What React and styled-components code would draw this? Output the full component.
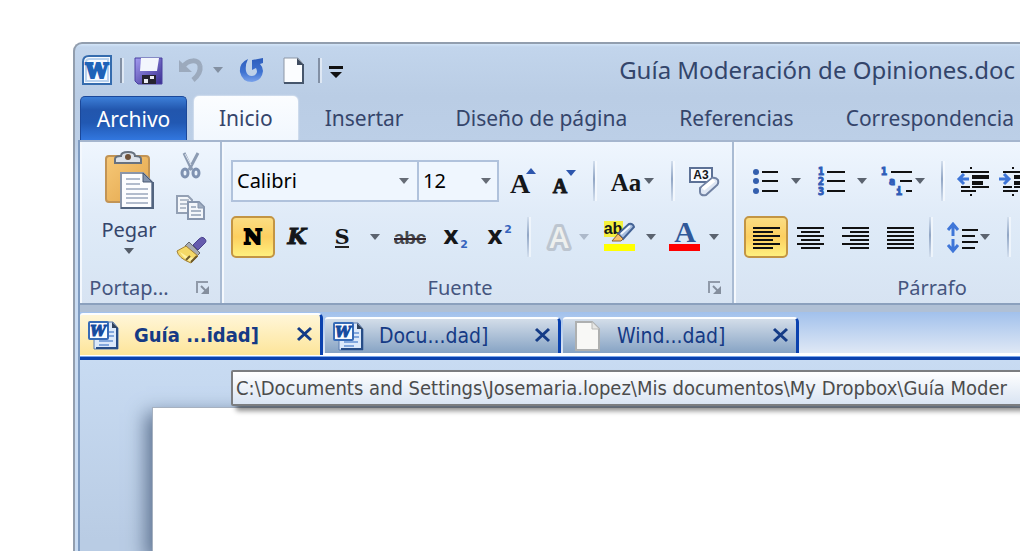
import React from "react";
import styled, { createGlobalStyle, css } from "styled-components";

const UI = `"Noto Sans", "Open Sans", sans-serif`;
const TAHOMA = `Tahoma, "DejaVu Sans Condensed", "DejaVu Sans", sans-serif`;
const SERIF = `"DejaVu Serif", "Liberation Serif", serif`;

const Global = createGlobalStyle`
  * { box-sizing: border-box; }
  body { margin: 0; background: #fff; font-family: ${UI}; }
  button { font: inherit; color: inherit; border: 0; padding: 0; background: none; }
  svg { display: block; }
`;

const Screen = styled.main`
  display: flex;
  min-height: 100vh;
  padding: 42px 0 0 73px;
  overflow: hidden;
`;
const Frame = styled.section`
  flex: 1;
  min-width: 0;
  display: flex;
  flex-direction: column;
  padding-left: 3px;
  border: 2px solid #929eae;
  border-width: 2px 0 0 2px;
  border-radius: 9px 0 0 0;
  background: linear-gradient(#d3e5f8 0, #c2d5ec 3px, #bacde5 52px, #bccfe7 98px, #c9dcf3 130px);
  overflow: hidden;
`;
const TitleBar = styled.header`
  display: flex;
  align-items: center;
  height: 52px;
  padding: 0 5px 0 2px;
`;
const Title = styled.h1`
  margin: 0 0 0 auto;
  font-size: 24px;
  line-height: 32px;
  font-weight: 400;
  color: #33456b;
  white-space: nowrap;
`;
const Tool = styled.button`
  flex: none;
  width: ${(p) => p.$w}px;
  height: 42px;
  border-radius: 5px;
  ${(p) =>
    p.$on &&
    css`
      border: 2px solid #c39544;
      background: linear-gradient(#fbdd83, #fdcf60 50%, #fff07e);
      svg { margin: -2px; }
    `}
`;
const Divider = styled.span`
  flex: none;
  width: 2px;
  height: ${(p) => p.$h || 40}px;
  margin: 0 6px;
  background: ${(p) => p.$c || "linear-gradient(#d3dfee, #91a6c5 45%, #d3dfee)"};
  box-shadow: 2px 0 0 #ffffff80;
`;
const TabRow = styled.nav`
  display: flex;
  gap: 2px;
  height: 44px;
  padding-left: 2px;
  font-size: 21px;
  line-height: 42px;
  color: #35456b;
  white-space: nowrap;
`;
const FileTab = styled.button`
  flex: none;
  width: 107px;
  margin-right: 5px;
  border: 1px solid #1b489a;
  border-bottom: 0;
  border-radius: 5px 5px 0 0;
  color: #fff;
  background: linear-gradient(#3d7fd8, #2256ad 30%, #2158b2 60%, #3277df);
`;
const Tab = styled.button`
  flex: none;
  padding: 0 25px;
  border-radius: 5px 5px 0 0;
  ${(p) => p.$on && css`background: linear-gradient(#fbfdff, #f1f7fe); box-shadow: 0 0 2px #fff;`}
`;
const Body = styled.div`
  flex: 1;
  display: flex;
  flex-direction: column;
  border-left: 2px solid #7f9cc2;
`;
const Ribbon = styled.div`
  display: flex;
  height: 165px;
  border-top: 2px solid #a5b6ce;
  border-bottom: 2px solid #8ba0bd;
  background: linear-gradient(#eff6fe, #e0ebf8 45%, #dbe8f6 70%, #d7e3f2);
  overflow: hidden;
`;
const Group = styled.section`
  flex: none;
  display: flex;
  flex-direction: column;
  min-width: ${(p) => p.$w}px;
  padding: 0 ${(p) => p.$pad}px;
  border-right: 2px solid #a9bbd3;
  box-shadow: inset 2px 0 0 #f4f8fd;
`;
const Tools = styled.div`
  display: flex;
  align-items: center;
  height: 42px;
  margin-top: ${(p) => p.$top}px;
`;
const GroupFoot = styled.footer`
  display: flex;
  align-items: center;
  height: 30px;
  margin-top: auto;
  padding-right: ${(p) => p.$end || 0}px;
  color: #45557f;
  font-size: 20px;
  line-height: 28px;
  span { flex: 1; padding-right: 18px; text-align: center; white-space: nowrap; }
`;
const Clip = styled.div`
  display: flex;
  height: 131px;
  padding-left: 6px;
`;
const PasteButton = styled.button`
  width: 84px;
  display: flex;
  flex-direction: column;
  align-items: center;
  padding-top: 8px;
  font-size: 20px;
  line-height: 28px;
  color: #35456b;
  svg:first-child { margin-bottom: 4px; }
`;
const ClipStack = styled.div`
  display: flex;
  flex-direction: column;
  padding: 3px 0 0;
`;
const Combo = styled.label`
  display: grid;
  flex: none;
  width: ${(p) => p.$w}px;
  height: 42px;
  > * { grid-area: 1 / 1; }
  svg { justify-self: end; align-self: center; margin-right: 8px; pointer-events: none; }
`;
const Select = styled.select`
  appearance: none;
  width: 100%;
  padding: 0 4px;
  border: 2px solid #b0c2dc;
  border-right-width: ${(p) => (p.$joined ? 0 : 2)}px;
  border-radius: 0;
  background: #eff6fe;
  color: #000;
  font: 20px/28px ${UI};
`;
const DocTabs = styled.nav`
  display: flex;
  align-items: flex-end;
  gap: 2px;
  height: 55px;
  border-top: 7px solid #b0c0d5;
  border-bottom: 3px solid #0a41ae;
  box-shadow: inset 0 -1px 0 #79a5ea;
  background: linear-gradient(#a2c1ec, #dfe8f5 41px, #fff 41px);
`;
const DocTab = styled.div`
  display: flex;
  align-items: center;
  flex: none;
  width: ${(p) => (p.$on ? 243 : 236)}px;
  height: ${(p) => (p.$on ? 42 : 36)}px;
  margin-bottom: ${(p) => (p.$on ? 2 : 4)}px;
  padding: 0 6px 0 8px;
  border-right: 3px solid #0a41ae;
  border-top: 2px solid #fdfeff;
  border-radius: 3px 5px 0 0;
  background: ${(p) =>
    p.$on ? "linear-gradient(#fff6d8, #fde59a)" : "linear-gradient(#d3dde9, #86a3c4)"};
  color: #153a85;
  font-family: ${TAHOMA};
  font-size: ${(p) => (p.$on ? 20 : 21)}px;
  line-height: 28px;
  font-weight: ${(p) => (p.$on ? 700 : 400)};
`;
const DocName = styled.button`
  flex: 1;
  display: flex;
  align-items: center;
  gap: 14px;
  white-space: nowrap;
`;
const Workspace = styled.div`
  position: relative;
  flex: 1;
  display: flex;
  min-height: 190px;
  padding: 47px 0 0 72px;
  background: linear-gradient(#c8dbf2, #b9cce4 180px);
`;
const Paper = styled.article`
  flex: 1;
  background: #fff;
  border: 1px solid #a6b1c0;
  border-width: 1px 0 0 1px;
  box-shadow: -4px 8px 18px 2px #5d7290;
`;
const Tooltip = styled.div`
  position: absolute;
  top: 10px;
  left: 151px;
  right: -12px;
  padding: 3px;
  border: 2px solid #7b7d80;
  border-radius: 2px;
  background: linear-gradient(#fff, #d9e4f3);
  box-shadow: 5px 5px 5px #00000070;
  color: #4c4c4c;
  font-family: ${TAHOMA};
  font-size: 20px;
  line-height: 26px;
  white-space: nowrap;
`;

const Arrow = ({ x = 0, y = 18, c = "#5b636f" }) => (
  <path d={`M${x - 5} ${y}h10l-5 6z`} fill={c} />
);
const DropArrow = () => (
  <svg width="10" height="6"><path d="M0 0h10l-5 6z" fill="#666c76" /></svg>
);
const Icon = ({ w, h = 42, children }) => (
  <svg width={w} height={h} viewBox={`0 0 ${w} ${h}`} aria-hidden="true">{children}</svg>
);
const IconTool = ({ w, label, on, children }) => (
  <Tool $w={w} $on={on} aria-label={label} aria-pressed={on}>
    <Icon w={w}>{children}</Icon>
  </Tool>
);
const Glyph = ({ x, y, s, f = SERIF, c = "#15171a", b = 700, i, heavy, children }) => (
  <text x={x} y={y} fontSize={s} fontFamily={f} fill={c} stroke={heavy ? c : "none"} strokeWidth={heavy || 0} fontWeight={b} fontStyle={i ? "italic" : "normal"} textAnchor="middle">
    {children}
  </text>
);
const Lines = ({ rows, c = "#111" }) =>
  rows.map(([x, y, w], k) => <rect key={k} x={x} y={y} width={w} height="2" fill={c} />);

const Launcher = () => (
  <button aria-label="Más opciones">
    <svg width="16" height="16" viewBox="0 0 16 16">
      <path d="M2 13V2h11" stroke="#909aa9" strokeWidth="2" fill="none" />
      <path d="M6 6l5 5" stroke="#848e9d" strokeWidth="2" />
      <path d="M14 6v8H6z" fill="#848e9d" />
    </svg>
  </button>
);

const WordDoc = () => (
  <svg width="32" height="32" viewBox="0 0 32 32" aria-hidden="true">
    <path d="M6 3h19l5 6v21H6z" fill="#dce9fa" stroke="#5a7cb0" strokeWidth="1" />
    <path d="M29 9v20H8" fill="none" stroke="#274d87" strokeWidth="2" />
    <path d="M24 3v6h6z" fill="#31435d" />
    <path d="M21 13h5M21 17h5M11 22h14M11 26h10" stroke="#82a7dc" strokeWidth="2" />
    <rect x="1" y="3" width="19" height="17" rx="1" fill="#f8fbff" stroke="#376bb7" strokeWidth="2" />
    <Glyph x={10} y={17} s={14} i c="#164b9f" heavy={1}>W</Glyph>
  </svg>
);
const BlankDoc = () => (
  <svg width="32" height="32" viewBox="0 0 32 32" aria-hidden="true">
    <path d="M5 2h16l7 7v21H5z" fill="#f8f8f6" stroke="#aeb0b0" strokeWidth="2" />
    <path d="M21 2v7h7" fill="#e7e7e5" stroke="#b8b8b6" strokeWidth="1" />
  </svg>
);
const Close = ({ name }) => (
  <button aria-label={`Cerrar ${name}`}>
    <svg width="18" height="18" viewBox="0 0 18 18">
      <path d="M2 2l13 12M15 2L2 14" stroke="#143b86" strokeWidth="3" />
    </svg>
  </button>
);

const docs = [
  { name: "Guía ...idad]", on: true, icon: <WordDoc /> },
  { name: "Docu...dad]", icon: <WordDoc /> },
  { name: "Wind...dad]", icon: <BlankDoc /> },
];

function QuickAccess() {
  const bar = "#8290a5";
  return (
    <>
      <IconTool w={34} label="Word">
        <path d="M9 7h22v28H3V13q0-6 6-6z" fill="#f6faff" stroke="#356cae" strokeWidth="2" />
        <path d="M6 13q0-3 4-3h18v22H6z" stroke="#b9d2ee" strokeWidth="2" fill="none" />
        <Glyph x={17} y={29} s={20} c="#1e63b8" heavy={2}>W</Glyph>
      </IconTool>
      <Divider $h={25} $c={bar} />
      <IconTool w={40} label="Guardar">
        <defs>
          <linearGradient id="disk" x2="1" y2="1"><stop stopColor="#a39cf0" /><stop offset="1" stopColor="#392d91" /></linearGradient>
        </defs>
        <path d="M7 9h27v26H10l-3-3z" fill="url(#disk)" stroke="#4a40a0" strokeWidth="1" />
        <path d="M13 9h18l-2 13H12z" fill="#f3f6fd" />
        <path d="M14 26h14v9H14z" fill="#25232f" />
        <path d="M16 30h4v4h-4zM22 27h4v3h-4z" fill="#eceef4" />
      </IconTool>
      <IconTool w={60} label="Deshacer">
        <path d="M11 11v12h13z" fill="#9caabd" />
        <path d="M15 18c5-8 16-8 17-1 1 6-2 10-7 14" fill="none" stroke="#9caabd" strokeWidth="5" />
        <Arrow x={50} y={18} c="#8390a2" />
      </IconTool>
      <IconTool w={48} label="Rehacer">
        <defs>
          <linearGradient id="redo" gradientUnits="userSpaceOnUse" x1="0" y1="9" x2="0" y2="33"><stop stopColor="#2c5cbb" /><stop offset=".6" stopColor="#3f73d2" /><stop offset="1" stopColor="#7aa2ea" /></linearGradient>
        </defs>
        <path d="M20 10Q11 14 12 23q2 10 12 10 10-1 11-11 0-4-3-7l3-1V9l-11 2v10l4-2q1 2 1 4-1 4-5 4-5 0-6-5-1-6 2-12z" fill="url(#redo)" />
      </IconTool>
      <IconTool w={36} label="Nuevo">
        <path d="M8 9h14l5 6v19H8z" fill="#fbfdff" stroke="#8d97a6" strokeWidth="1" />
        <path d="M27 15v19H8" fill="none" stroke="#46566c" strokeWidth="2" />
        <path d="M21 9v7h7z" fill="#3f4d61" />
      </IconTool>
      <Divider $h={25} $c={bar} />
      <IconTool w={24} label="Personalizar">
        <path d="M3 17h14v3H3zM4 23h12l-6 6z" fill="#111" />
      </IconTool>
    </>
  );
}

function Clipboard() {
  return (
    <Group $w={142} $pad={1}>
      <Clip>
        <PasteButton>
          <svg width="54" height="62" viewBox="0 0 54 62" aria-hidden="true">
            <defs><linearGradient id="board" x2="1" y2="1"><stop stopColor="#f6c878" /><stop offset="1" stopColor="#e3a64b" /></linearGradient></defs>
            <rect x="4" y="6" width="43" height="46" rx="3" fill="url(#board)" stroke="#c29455" strokeWidth="2" />
            <path d="M13 13V9q0-3 6-3 0-4 7-4t7 4q6 0 6 3v4z" fill="#dce2ea" stroke="#68727f" strokeWidth="2" />
            <circle cx="26" cy="7" r="3" fill="#705239" />
            <path d="M19 23h22l9 9v26H19z" fill="#fcfdff" stroke="#8995aa" strokeWidth="2" />
            <path d="M51 32v26H19" fill="none" stroke="#52647f" strokeWidth="2" />
            <path d="M41 23v9h9z" fill="#8292ac" stroke="#485872" />
            <path d="M24 29h14M24 34h14M24 39h22M24 44h22M24 48h22M24 53h22" stroke="#b2bccd" strokeWidth="2" />
          </svg>
          Pegar
          <Icon w={10} h={12}><path d="M0 4h10l-5 6z" fill="#555d69" /></Icon>
        </PasteButton>
        <ClipStack>
          <IconTool w={42} label="Cortar">
            <path d="M13 8l8 17M27 8l-9 17" stroke="#8d9cb3" strokeWidth="3" />
            <path d="M14 9l6 11" stroke="#dfe6ef" strokeWidth="1" />
            <ellipse cx="14" cy="28" rx="3" ry="4" fill="none" stroke="#7f92b1" strokeWidth="3" />
            <ellipse cx="25" cy="28" rx="3" ry="4" fill="none" stroke="#7f92b1" strokeWidth="3" />
          </IconTool>
          <IconTool w={42} label="Copiar">
            <path d="M6 9h11l4 4v13H6z" fill="#f3f6fa" stroke="#93a0b4" strokeWidth="2" />
            <path d="M9 13h9M9 17h9M9 21h6" stroke="#b3bdcb" strokeWidth="2" />
            <path d="M17 15h11l5 5v12H17z" fill="#f3f6fa" stroke="#8796ae" strokeWidth="2" />
            <path d="M27 15v6h6" fill="#a1afc2" stroke="#8796ae" />
            <path d="M20 20h5M20 24h10M20 28h10" stroke="#a9b5c6" strokeWidth="2" />
          </IconTool>
          <IconTool w={42} label="Copiar formato">
            <path d="M33 9q4 3 0 6l-6 6-5-5 6-6q3-3 5-1z" fill="#665cae" stroke="#4a418d" />
            <path d="M18 13l11 11-4 4L14 17z" fill="#a9acb0" stroke="#66696f" />
            <path d="M15 17L6 22q1 7 14 12l7-7z" fill="#f5d967" stroke="#a28036" />
            <path d="M9 23l8 5 7 1-4 4q-7-3-11-10z" fill="#fff1a2" />
            <path d="M20 33l6-6M15 31l4-4" stroke="#6d592b" strokeWidth="2" />
          </IconTool>
        </ClipStack>
      </Clip>
      <GroupFoot $end={8}><span>Portap...</span><Launcher /></GroupFoot>
    </Group>
  );
}

function FontGroup() {
  return (
    <Group $w={512} $pad={9}>
      <Tools $top={18}>
        <Combo $w={186}>
          <Select $joined aria-label="Fuente" defaultValue="Calibri"><option>Calibri</option></Select>
          <DropArrow />
        </Combo>
        <Combo $w={82}>
          <Select aria-label="Tamaño" defaultValue="12"><option>12</option></Select>
          <DropArrow />
        </Combo>
        <IconTool w={44} label="Aumentar fuente">
          <Glyph x={21} y={33} s={28} f="Liberation Serif, serif">A</Glyph>
          <path d="M27 14l5-6 5 6z" fill="#2d56ad" />
        </IconTool>
        <IconTool w={44} label="Reducir fuente">
          <Glyph x={17} y={33} s={20} f="Liberation Serif, serif" heavy={1}>A</Glyph>
          <path d="M23 10h10l-5 6z" fill="#2d56ad" />
        </IconTool>
        <Divider />
        <IconTool w={64} label="Cambiar mayúsculas">
          <Glyph x={25} y={31} s={25} f="Liberation Serif, serif">Aa</Glyph>
          <Arrow x={48} />
        </IconTool>
        <Divider />
        <IconTool w={44} label="Borrar formato">
          <rect x="11" y="8" width="22" height="14" fill="#f9fbff" stroke="#5c7196" strokeWidth="2" />
          <Glyph x={22} y={19} s={12} f="Liberation Sans, sans-serif">A3</Glyph>
          <path d="M21 28L33 18q4-1 6 2 1 4-2 6L27 35q-6 1-6-3z" fill="#dfe7f4" stroke="#7182a3" strokeWidth="2" />
          <path d="M24 29l11-9" stroke="#fff" strokeWidth="4" />
        </IconTool>
      </Tools>
      <Tools $top={14}>
        <IconTool w={44} label="Negrita" on>
          <Glyph x={22} y={28} s={20} c="#000" heavy={2}>N</Glyph>
        </IconTool>
        <IconTool w={44} label="Cursiva"><Glyph x={22} y={28} s={22} i heavy={1}>K</Glyph></IconTool>
        <IconTool w={66} label="Subrayado">
          <Glyph x={23} y={28} s={21}>S</Glyph>
          <path d="M16 30h14v2H16z" fill="#222" />
          <Arrow x={56} />
        </IconTool>
        <IconTool w={48} label="Tachado">
          <Glyph x={25} y={28} s={19} f="Liberation Sans, sans-serif" c="#45474c">abc</Glyph>
          <path d="M9 22h32v2H9z" fill="#33262d" />
        </IconTool>
        <IconTool w={44} label="Subíndice">
          <Glyph x={18} y={28} s={24} f="DejaVu Sans, sans-serif">x</Glyph>
          <Glyph x={31} y={32} s={11} f="DejaVu Sans, sans-serif" c="#3563bd">2</Glyph>
        </IconTool>
        <IconTool w={44} label="Superíndice">
          <Glyph x={18} y={28} s={24} f="DejaVu Sans, sans-serif">x</Glyph>
          <Glyph x={31} y={17} s={11} f="DejaVu Sans, sans-serif" c="#3563bd">2</Glyph>
        </IconTool>
        <Divider />
        <IconTool w={60} label="Efectos de texto">
          <text x="24" y="32" fontSize="29" fontFamily="Open Sans, sans-serif" fontWeight="600" textAnchor="middle" fill="#eef0ee" stroke="#bcc5d0" strokeWidth="6" strokeLinejoin="round" paintOrder="stroke">A</text>
          <Arrow x={49} c="#adb9ca" />
        </IconTool>
        <IconTool w={66} label="Resaltado">
          <path d="M9 5h19v16H9z" fill="#f4f03d" />
          <Glyph x={18} y={18} s={16} f="Liberation Sans, sans-serif">ab</Glyph>
          <path d="M23 18L34 8q4-1 5 3L28 23z" fill="#a9bfdf" stroke="#446395" strokeWidth="2" />
          <path d="M26 18l9-8" stroke="#f2f7fd" strokeWidth="2" />
          <path d="M17 25l6-7 5 5-2 2z" fill="#f7c26c" stroke="#866138" />
          <path d="M9 28h31v7H9z" fill="#ff0" />
          <Arrow x={56} />
        </IconTool>
        <IconTool w={62} label="Color de fuente">
          <Glyph x={24} y={26} s={30} f="Liberation Serif, serif" c="#315999">A</Glyph>
          <path d="M8 28h31v7H8z" fill="#f00" />
          <Arrow x={53} />
        </IconTool>
      </Tools>
      <GroupFoot><span>Fuente</span><Launcher /></GroupFoot>
    </Group>
  );
}

const Level = ({ x, y, children }) => (
  <Glyph x={x} y={y} s={10} f="DejaVu Sans Mono, monospace" c="#2f5db8" heavy={1}>{children}</Glyph>
);
const wide = 27;
const align = (short) =>
  [11, 15, 19, 23, 27, 31].map((y, k) => [9 + (k % 2 ? short[0] : 0), y, k % 2 ? short[1] : wide]);

const Indent = ({ left }) => (
  <>
    <Lines rows={[[8, 11, 9], [19, 11, 17], [8, 26, 9], [19, 26, 17], [8, 30, 9], [19, 30, 4]]} />
    <path d="M19 15h17v4H19zM19 21h11v4H19zM17 7h2v2h-2zM17 11h2v2h-2zM17 34h2v2h-2zM17 30h2v2h-2z" fill="#111" />
    <path
      d={left ? "M16 19H6M11 14l-5 5 5 5" : "M4 19h10M9 14l5 5-5 5"}
      fill="none"
      stroke="#3f76d8"
      strokeWidth="3"
    />
  </>
);

function Paragraph() {
  return (
    <Group $w={432} $pad={10}>
      <Tools $top={18}>
        <IconTool w={66} label="Viñetas">
          {[12, 21, 31].map((y) => <circle key={y} cx="12" cy={y} r="3" fill="#345fae" />)}
          <Lines rows={[[18, 11, 16], [18, 20, 16], [18, 30, 16]]} />
          <Arrow x={52} />
        </IconTool>
        <IconTool w={66} label="Numeración">
          <Level x={11} y={15}>1</Level><Level x={11} y={25}>2</Level><Level x={11} y={35}>3</Level>
          <Lines rows={[[17, 11, 18], [17, 20, 18], [17, 30, 18]]} />
          <Arrow x={52} />
        </IconTool>
        <IconTool w={59} label="Lista multinivel">
          <Level x={8} y={15}>1</Level><Level x={16} y={25}>a</Level><Level x={23} y={35}>i</Level>
          <Lines rows={[[15, 11, 21], [24, 20, 12], [30, 30, 6]]} />
          <Arrow x={44} />
        </IconTool>
        <Divider />
        <IconTool w={42} label="Reducir sangría"><g transform="translate(4 0)"><Indent left /></g></IconTool>
        <IconTool w={44} label="Aumentar sangría"><g transform="translate(4 0)"><Indent /></g></IconTool>
      </Tools>
      <Tools $top={14}>
        <IconTool w={44} label="Alinear a la izquierda" on><Lines rows={align([0, 20])} /></IconTool>
        <IconTool w={45} label="Centrar"><Lines rows={align([4, 19])} /></IconTool>
        <IconTool w={45} label="Alinear a la derecha"><Lines rows={align([8, 19])} /></IconTool>
        <IconTool w={45} label="Justificar"><Lines rows={align([0, 27])} /></IconTool>
        <Divider />
        <IconTool w={64} label="Interlineado">
          <path d="M16 20V8M11 14l5-6 5 6M16 23v12M11 29l5 6 5-6" fill="none" stroke="#3f76d8" strokeWidth="3" />
          <Lines rows={[[25, 13, 16], [25, 19, 13], [25, 25, 16], [25, 31, 13]]} />
          <Arrow x={48} />
        </IconTool>
        <Divider />
      </Tools>
      <GroupFoot><span>Párrafo</span><Launcher /></GroupFoot>
    </Group>
  );
}

export default function App() {
  return (
    <Screen>
      <Global />
      <Frame>
        <TitleBar>
          <QuickAccess />
          <Title>Guía Moderación de Opiniones.doc</Title>
        </TitleBar>
        <TabRow>
          <FileTab>Archivo</FileTab>
          <Tab $on>Inicio</Tab>
          <Tab>Insertar</Tab>
          <Tab>Diseño de página</Tab>
          <Tab>Referencias</Tab>
          <Tab>Correspondencia</Tab>
        </TabRow>
        <Body>
          <Ribbon>
            <Clipboard />
            <FontGroup />
            <Paragraph />
          </Ribbon>
          <DocTabs>
            {docs.map((d) => (
              <DocTab key={d.name} $on={d.on}>
                <DocName>{d.icon}{d.name}</DocName>
                <Close name={d.name} />
              </DocTab>
            ))}
          </DocTabs>
          <Workspace>
            <Paper />
            <Tooltip role="tooltip">
              C:\Documents and Settings\Josemaria.lopez\Mis documentos\My Dropbox\Guía Moder
            </Tooltip>
          </Workspace>
        </Body>
      </Frame>
    </Screen>
  );
}
